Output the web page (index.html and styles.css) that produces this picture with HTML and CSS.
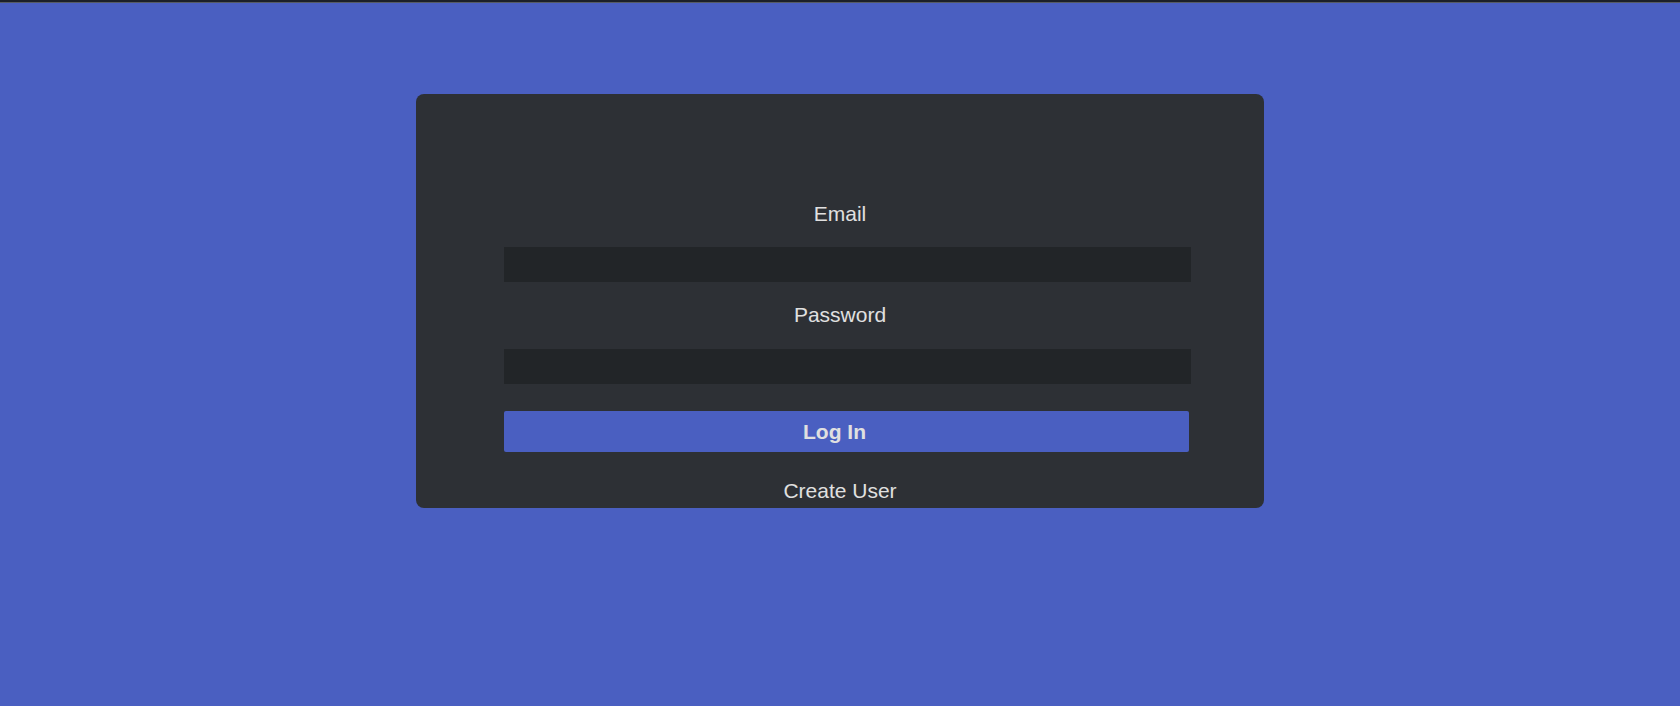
FILE: index.html
```html
<!DOCTYPE html>
<html lang="en">
<head>
<meta charset="utf-8">
<title>Log In</title>
<link rel="stylesheet" href="styles.css">
</head>
<body>
<div class="topbar"></div>
<main class="page">
  <section class="card">
    <form class="login-form">
      <label class="field-label" for="email">Email</label>
      <input class="field-input" id="email" type="email">
      <label class="field-label label-password" for="password">Password</label>
      <input class="field-input input-password" id="password" type="password">
      <button class="login-btn" type="button">Log In</button>
      <a class="create-link">Create User</a>
    </form>
  </section>
</main>
</body>
</html>
```

FILE: styles.css
```css
html, body {
  margin: 0;
  padding: 0;
}
body {
  background: #4a5fc1;
  font-family: "Liberation Sans", Arial, sans-serif;
  color: #e0e0e0;
  height: 706px;
  overflow: hidden;
}
.topbar {
  height: 2px;
  background: #1c2029;
  border-bottom: 1px solid #565b64;
}
.page {
  padding-top: 91px;
}
.card {
  width: 848px;
  height: 414px;
  margin: 0 auto;
  background: #2d3035;
  border-radius: 8px;
  box-sizing: border-box;
}
.login-form {
  display: flex;
  flex-direction: column;
  padding-top: 108px;
}
.field-label {
  display: block;
  text-align: center;
  font-size: 21px;
  line-height: 23px;
  height: 23px;
}
.field-input {
  display: block;
  width: 687px;
  height: 35px;
  margin: 22px 0 0 88px;
  padding: 0;
  border: none;
  background: #222528;
  box-sizing: border-box;
  outline: none;
}
.label-password {
  margin-top: 21px;
}
.input-password {
  margin-top: 23px;
}
.login-btn {
  display: block;
  width: 685px;
  height: 41px;
  margin: 27px 0 0 88px;
  padding: 0 24px 0 0;
  border: none;
  border-radius: 2px;
  background: #4a5fc1;
  color: #e0e0e0;
  font-family: "Liberation Sans", Arial, sans-serif;
  font-size: 21px;
  font-weight: bold;
  line-height: 41px;
}
.create-link {
  display: block;
  margin-top: 27px;
  text-align: center;
  font-size: 21px;
  line-height: 23px;
  color: #e0e0e0;
}
```
